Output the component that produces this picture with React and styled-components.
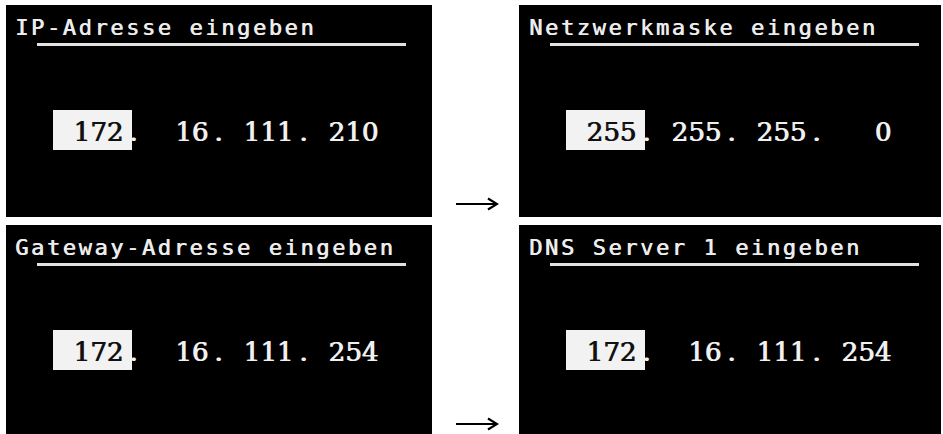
import React from 'react';
import styled, { createGlobalStyle } from 'styled-components';

const Global = createGlobalStyle`
  html, body { margin: 0; padding: 0; background: #fff; overflow: hidden; }
`;

const Page = styled.div`
  display: grid;
  grid-template-columns: 426px 87px 422px;
  grid-auto-rows: 212px;
  row-gap: 8px;
  padding: 5px 0 0 6px;
  width: 943px;
  height: 434px;
  box-sizing: border-box;
  overflow: hidden;
`;

const Screen = styled.section`
  background: #000;
  display: flex;
  flex-direction: column;
  padding-top: 11px;
  box-sizing: border-box;
  overflow: hidden;
`;

const Title = styled.h2`
  margin: 0;
  padding-left: ${p => p.$inset}px;
  font-family: "DejaVu Sans Mono", monospace;
  font-weight: normal;
  font-size: 22px;
  line-height: 24px;
  letter-spacing: 2.6px;
  color: #ececec;
  text-shadow: 0.7px 0 0 #ececec;
  white-space: nowrap;
`;

const Rule = styled.div`
  height: 3px;
  width: 369px;
  margin: 3px 0 0 31px;
  background: #e2e2e2;
`;

const Address = styled.div`
  display: flex;
  margin-top: 64px;
  padding-left: 67px;
  font-family: "DejaVu Serif", serif;
  font-weight: normal;
  font-size: 26px;
  color: #f0f0f0;
  text-shadow: 1px 0 0 currentColor;
`;

const Field = styled.div`
  display: flex;
  align-items: flex-start;
  width: 85px;
  flex: none;
`;

const Digits = styled.span`
  display: block;
  width: 50px;
  height: 38px;
  line-height: 40px;
  padding-top: 2px;
  box-sizing: content-box;
  text-align: right;
  ${p => p.$active && `
    background: #f2f2f2;
    color: #111;
    padding-left: 20px;
    margin-left: -20px;
    padding-right: 9px;
    margin-right: -9px;
  `}
`;

const Dot = styled.span`
  display: block;
  padding: 2px 0 0 6px;
  line-height: 40px;
  visibility: ${p => (p.$hidden ? 'hidden' : 'visible')};
`;

const Connector = styled.div`
  display: flex;
  align-items: flex-end;
  justify-content: center;
  padding: 0 0 6px 2px;
`;

const Arrow = () => (
  <svg width="44" height="14" viewBox="0 0 44 14">
    <path d="M1 7 H41" stroke="#000" strokeWidth="2.2" fill="none" />
    <path d="M33 1.5 L42 7 L33 12.5" stroke="#000" strokeWidth="2.2" fill="none" />
  </svg>
);

const screens = [
  { title: 'IP-Adresse eingeben', inset: 9, parts: ['172', '16', '111', '210'] },
  { title: 'Netzwerkmaske eingeben', inset: 10, parts: ['255', '255', '255', '0'] },
  { title: 'Gateway-Adresse eingeben', inset: 9, parts: ['172', '16', '111', '254'] },
  { title: 'DNS Server 1 eingeben', inset: 10, parts: ['172', '16', '111', '254'] },
];

const Display = ({ title, inset, parts }) => (
  <Screen>
    <Title $inset={inset}>{title}</Title>
    <Rule />
    <Address>
      {parts.map((p, i) => (
        <Field key={i}>
          <Digits $active={i === 0}>{p}</Digits>
          <Dot $hidden={i === parts.length - 1}>.</Dot>
        </Field>
      ))}
    </Address>
  </Screen>
);

export default function App() {
  return (
    <>
      <Global />
      <Page>
        <Display {...screens[0]} />
        <Connector><Arrow /></Connector>
        <Display {...screens[1]} />
        <Display {...screens[2]} />
        <Connector><Arrow /></Connector>
        <Display {...screens[3]} />
      </Page>
    </>
  );
}
